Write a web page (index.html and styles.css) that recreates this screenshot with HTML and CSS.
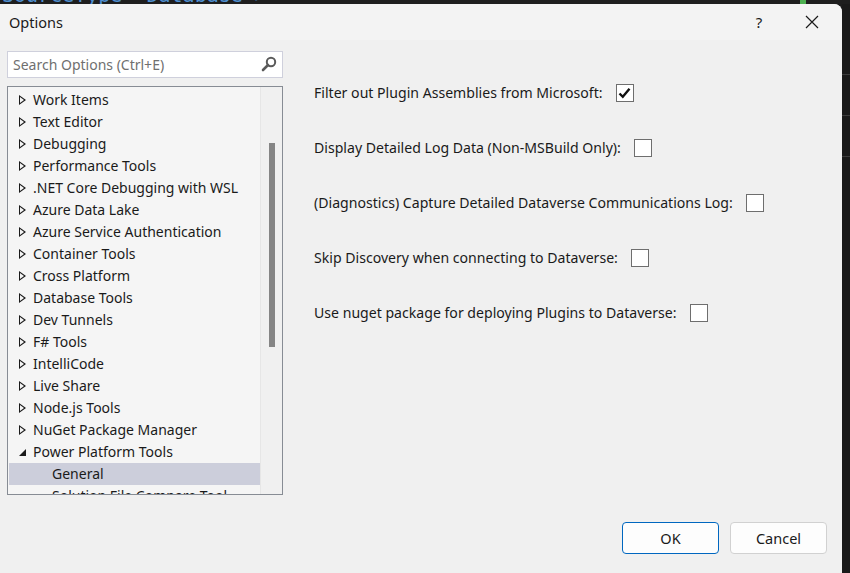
FILE: index.html
```html
<!DOCTYPE html>
<html lang="en">

<head>
    <meta charset="UTF-8">
    <meta name="viewport" content="width=device-width, initial-scale=1.0">
    <title>Options</title>
    <link rel="stylesheet" href="styles.css">
</head>

<body>
    <div class="editor-top"><span class="code">SourceType= Database &gt;</span><span class="mark"></span></div>
    <div class="screen">
        <div class="dialog">
            <div class="titlebar">
                <span class="title">Options</span>
                <span class="help">?</span>
                <span class="close">
                    <svg width="14" height="14" viewBox="0 0 14 14"><path d="M1 1 L13 13 M13 1 L1 13" stroke="#1a1a1a" stroke-width="1.2" fill="none"/></svg>
                </span>
            </div>
            <div class="content">
                <div class="left">
                    <div class="search">
                        <span class="placeholder">Search Options (Ctrl+E)</span>
                        <svg class="search-icon" width="16" height="16" viewBox="0 0 16 16">
                            <circle cx="10" cy="6" r="4.2" stroke="#5a5a5a" stroke-width="2" fill="none"/>
                            <path d="M7 9 L2 14" stroke="#5a5a5a" stroke-width="2.6" stroke-linecap="round"/>
                        </svg>
                    </div>
                    <div class="tree">
                        <ul class="items">
                            <li class="item"><span class="arrow"></span>Work Items</li>
                            <li class="item"><span class="arrow"></span>Text Editor</li>
                            <li class="item"><span class="arrow"></span>Debugging</li>
                            <li class="item"><span class="arrow"></span>Performance Tools</li>
                            <li class="item"><span class="arrow"></span>.NET Core Debugging with WSL</li>
                            <li class="item"><span class="arrow"></span>Azure Data Lake</li>
                            <li class="item"><span class="arrow"></span>Azure Service Authentication</li>
                            <li class="item"><span class="arrow"></span>Container Tools</li>
                            <li class="item"><span class="arrow"></span>Cross Platform</li>
                            <li class="item"><span class="arrow"></span>Database Tools</li>
                            <li class="item"><span class="arrow"></span>Dev Tunnels</li>
                            <li class="item"><span class="arrow"></span>F# Tools</li>
                            <li class="item"><span class="arrow"></span>IntelliCode</li>
                            <li class="item"><span class="arrow"></span>Live Share</li>
                            <li class="item"><span class="arrow"></span>Node.js Tools</li>
                            <li class="item"><span class="arrow"></span>NuGet Package Manager</li>
                            <li class="item"><span class="arrow open"></span>Power Platform Tools</li>
                            <li class="item child selected">General</li>
                            <li class="item child">Solution File Compare Tool</li>
                        </ul>
                        <div class="scrollbar"><div class="thumb"></div></div>
                    </div>
                </div>
                <div class="right">
                    <div class="option">Filter out Plugin Assemblies from Microsoft:<span class="check checked">
                        <svg width="13" height="12" viewBox="0 0 13 12"><path d="M1.5 6.5 L4.8 9.8 L11.5 1.8" stroke="#111" stroke-width="2.4" fill="none"/></svg>
                    </span></div>
                    <div class="option">Display Detailed Log Data (Non-MSBuild Only):<span class="check"></span></div>
                    <div class="option">(Diagnostics) Capture Detailed Dataverse Communications Log:<span class="check"></span></div>
                    <div class="option">Skip Discovery when connecting to Dataverse:<span class="check"></span></div>
                    <div class="option">Use nuget package for deploying Plugins to Dataverse:<span class="check"></span></div>
                </div>
            </div>
            <div class="footer">
                <button class="btn primary">OK</button>
                <button class="btn">Cancel</button>
            </div>
        </div>
        <div class="side">
            <div class="side-line"></div>
            <div class="side-line"></div>
            <div class="side-line"></div>
        </div>
    </div>
</body>

</html>
```

FILE: styles.css
```css
html,
body {
    margin: 0;
    height: 100%;
    overflow: hidden;
}

body {
    background-color: #1e1e1e;
    font-family: "Noto Sans", "Open Sans", sans-serif;
    font-size: 14px;
    color: #1a1a1a;
}

.editor-top {
    height: 4px;
    overflow: hidden;
    display: flex;
    position: relative;
}

.code {
    font-family: "DejaVu Sans Mono", monospace;
    font-size: 20px;
    line-height: 20px;
    margin-top: -15px;
    margin-left: 2px;
    color: #4f8fd0;
}

.mark {
    position: absolute;
    left: 800px;
    top: 0;
    width: 6px;
    height: 4px;
    background-color: #4caf50;
}

.screen {
    display: flex;
    height: 569px;
}

.dialog {
    flex: 0 0 842px;
    background-color: #f0f0f0;
    border-top-right-radius: 8px;
    display: flex;
    flex-direction: column;
}

.titlebar {
    height: 36px;
    background-color: #f3f3f3;
    border-top-right-radius: 8px;
    display: flex;
    align-items: center;
}

.title {
    margin-left: 9px;
    font-size: 14.5px;
    flex: 1;
}

.help {
    font-size: 15px;
    width: 20px;
    text-align: center;
    margin-right: 36px;
}

.close {
    display: flex;
    margin-right: 23px;
}

.content {
    display: flex;
    padding: 11px 0 0 7px;
}

.left {
    width: 276px;
    display: flex;
    flex-direction: column;
    gap: 8px;
}

.search {
    height: 27px;
    box-sizing: border-box;
    border: 1px solid #cfd0dc;
    background-color: #fff;
    display: flex;
    align-items: center;
    padding: 0 5px 0 5px;
}

.placeholder {
    flex: 1;
    color: #6f6f6f;
}

.search-icon {
    margin-top: -2px;
}

.tree {
    height: 409px;
    box-sizing: border-box;
    border: 1px solid #878c94;
    background-color: #f5f5f5;
    display: flex;
    overflow: hidden;
}

.items {
    list-style: none;
    margin: 0;
    padding: 2px 0 0 1px;
    flex: 1;
}

.item {
    height: 22px;
    line-height: 22px;
    padding-left: 10px;
    display: flex;
    align-items: center;
    white-space: nowrap;
}

.arrow {
    width: 0;
    height: 0;
    border-left: 7px solid #1a1a1a;
    border-top: 5px solid transparent;
    border-bottom: 5px solid transparent;
    margin-right: 7px;
    position: relative;
}

.arrow::after {
    content: "";
    position: absolute;
    left: -6px;
    top: -3px;
    border-left: 4px solid #f5f5f5;
    border-top: 3px solid transparent;
    border-bottom: 3px solid transparent;
}

.arrow.open {
    border-left: 7px solid transparent;
    border-top: 0;
    border-right: 0;
    border-bottom: 7px solid #1a1a1a;
}

.arrow.open::after {
    display: none;
}

.child {
    padding-left: 43px;
}

.selected {
    background-color: #cccedb;
}

.scrollbar {
    width: 22px;
    border-left: 1px solid #e6e6e6;
    background-color: #f0f0f0;
    display: flex;
    justify-content: center;
    padding-top: 56px;
    box-sizing: border-box;
}

.thumb {
    width: 6px;
    height: 204px;
    background-color: #858585;
}

.right {
    padding-left: 31px;
    padding-top: 14px;
    display: flex;
    flex-direction: column;
    font-size: 14.1px;
}

.option {
    height: 55px;
    display: flex;
    align-items: center;
    white-space: nowrap;
}

.check {
    width: 18px;
    height: 18px;
    box-sizing: border-box;
    border: 1px solid #6e6e6e;
    background-color: #fff;
    margin-left: 13px;
    display: flex;
    align-items: center;
    justify-content: center;
}

.footer {
    display: flex;
    justify-content: flex-end;
    gap: 11px;
    padding: 27px 15px 0 0;
}

.btn {
    width: 97px;
    height: 32px;
    border: 1px solid #d1d1d1;
    border-radius: 4px;
    background-color: #fdfdfd;
    font-family: "Noto Sans", "Open Sans", sans-serif;
    font-size: 14.5px;
    color: #1a1a1a;
}

.primary {
    border-color: #0067c0;
}

.side {
    flex: 1;
    background-color: #1a1a1a;
    display: flex;
    flex-direction: column;
    gap: 40px;
    padding-top: 70px;
}

.side-line {
    height: 1px;
    background-color: #3c3c3c;
}
```
